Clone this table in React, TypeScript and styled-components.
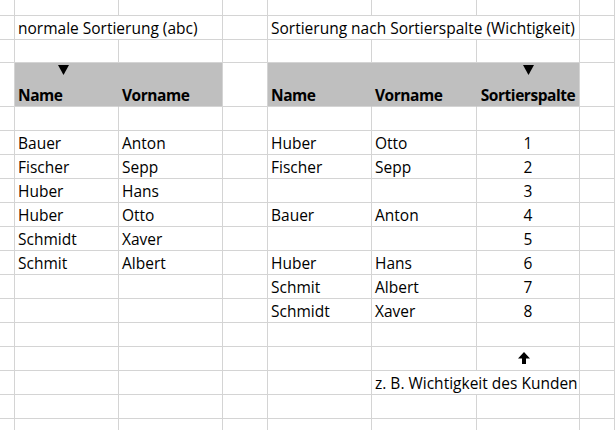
import React from "react";
import styled, { createGlobalStyle } from "styled-components";

const GlobalStyle = createGlobalStyle`
  html, body {
    margin: 0;
    padding: 0;
    background: #ffffff;
    overflow: hidden;
  }
`;

type CellDef = {
  text?: React.ReactNode;
  span?: number;
  center?: boolean;
  bold?: boolean;
  fill?: boolean;
  join?: boolean;
  marker?: "down" | "up";
  markerShift?: number;
};

const COLS = 8;

const e = (): CellDef => ({});
const emptyRow = (): CellDef[] => Array.from({ length: COLS }, e);

const left = [
  ["Bauer", "Anton"],
  ["Fischer", "Sepp"],
  ["Huber", "Hans"],
  ["Huber", "Otto"],
  ["Schmidt", "Xaver"],
  ["Schmit", "Albert"],
];

const right = [
  ["Huber", "Otto", "1"],
  ["Fischer", "Sepp", "2"],
  ["", "", "3"],
  ["Bauer", "Anton", "4"],
  ["", "", "5"],
  ["Huber", "Hans", "6"],
  ["Schmit", "Albert", "7"],
  ["Schmidt", "Xaver", "8"],
];

const rows: CellDef[][] = [
  emptyRow(),
  [
    {},
    { text: "normale Sortierung (abc)", span: 2 },
    {},
    { text: "Sortierung nach Sortierspalte (Wichtigkeit)", span: 3 },
    {},
  ],
  emptyRow(),
  [
    {},
    { text: "Name", bold: true, fill: true, join: true, marker: "down", markerShift: -6 },
    { text: "Vorname", bold: true, fill: true },
    {},
    { text: "Name", bold: true, fill: true, join: true },
    { text: "Vorname", bold: true, fill: true, join: true },
    { text: "Sortierspalte", bold: true, fill: true, center: true, marker: "down" },
    {},
  ],
  emptyRow(),
  ...right.map((r, i) => [
    {},
    { text: left[i]?.[0] },
    { text: left[i]?.[1] },
    {},
    { text: r[0] },
    { text: r[1] },
    { text: r[2], center: true },
    {},
  ]),
  emptyRow(),
  [{}, {}, {}, {}, {}, {}, { marker: "up", markerShift: -8 }, {}],
  [{}, {}, {}, {}, {}, { text: "z. B. Wichtigkeit des Kunden", span: 2 }, {}],
  emptyRow(),
  emptyRow(),
];

function DownMarker({ shift = 0 }: { shift?: number }) {
  return (
    <Marker $shift={shift} width="11" height="10" viewBox="0 0 11 10">
      <polygon points="0,0 11,0 5.5,10" fill="#000" />
    </Marker>
  );
}

function UpArrow({ shift = 0 }: { shift?: number }) {
  return (
    <Marker $shift={shift} $lift={5} width="12" height="12" viewBox="0 0 12 12">
      <polygon points="6,0 12,6.5 8,6.5 8,12 4,12 4,6.5 0,6.5" fill="#000" />
    </Marker>
  );
}

export default function App() {
  return (
    <>
      <GlobalStyle />
      <Sheet>
        {rows.map((row, ri) =>
          row.map((c, ci) => (
            <Cell
              key={`${ri}-${ci}`}
              $span={c.span ?? 1}
              $center={!!c.center || c.marker === "up"}
              $bold={!!c.bold}
              $fill={!!c.fill}
              $join={!!c.join}
              $stack={c.marker === "down"}
            >
              {c.marker === "down" && <DownMarker shift={c.markerShift} />}
              {c.marker === "up" && <UpArrow shift={c.markerShift} />}
              {c.text && <Text>{c.text}</Text>}
            </Cell>
          ))
        )}
      </Sheet>
    </>
  );
}

const Sheet = styled.div`
  display: grid;
  grid-template-columns: 15px 104px 104px 45px 104px 105px 103px 1fr;
  grid-template-rows: 16px 24px 23px 44px repeat(14, 24px);
  width: 615px;
  height: 430px;
  overflow: hidden;
  font-family: "Open Sans", "Noto Sans", sans-serif;
  font-size: 15.5px;
  color: #000;
`;

const Cell = styled.div<{
  $span: number;
  $center: boolean;
  $bold: boolean;
  $fill: boolean;
  $join: boolean;
  $stack: boolean;
}>`
  box-sizing: border-box;
  grid-column: span ${({ $span }) => $span};
  border-right: 1px solid
    ${({ $join }) => ($join ? "#bfbfbf" : "#d4d4d4")};
  border-bottom: 1px solid #d4d4d4;
  background: ${({ $fill }) => ($fill ? "#bfbfbf" : "transparent")};
  display: flex;
  flex-direction: column;
  justify-content: ${({ $stack }) => ($stack ? "space-between" : "flex-end")};
  align-items: ${({ $center }) => ($center ? "center" : "flex-start")};
  padding: 2px 3px 1px;
  font-weight: ${({ $bold }) => ($bold ? 700 : 400)};
  letter-spacing: ${({ $bold }) => ($bold ? "-0.45px" : "0")};
  white-space: nowrap;
  min-width: 0;
`;

const Text = styled.span`
  line-height: 19px;
`;

const Marker = styled.svg<{ $shift: number; $lift?: number }>`
  display: block;
  align-self: center;
  margin-left: ${({ $shift }) => $shift}px;
  margin-bottom: ${({ $lift = 0 }) => $lift}px;
  flex-shrink: 0;
`;
